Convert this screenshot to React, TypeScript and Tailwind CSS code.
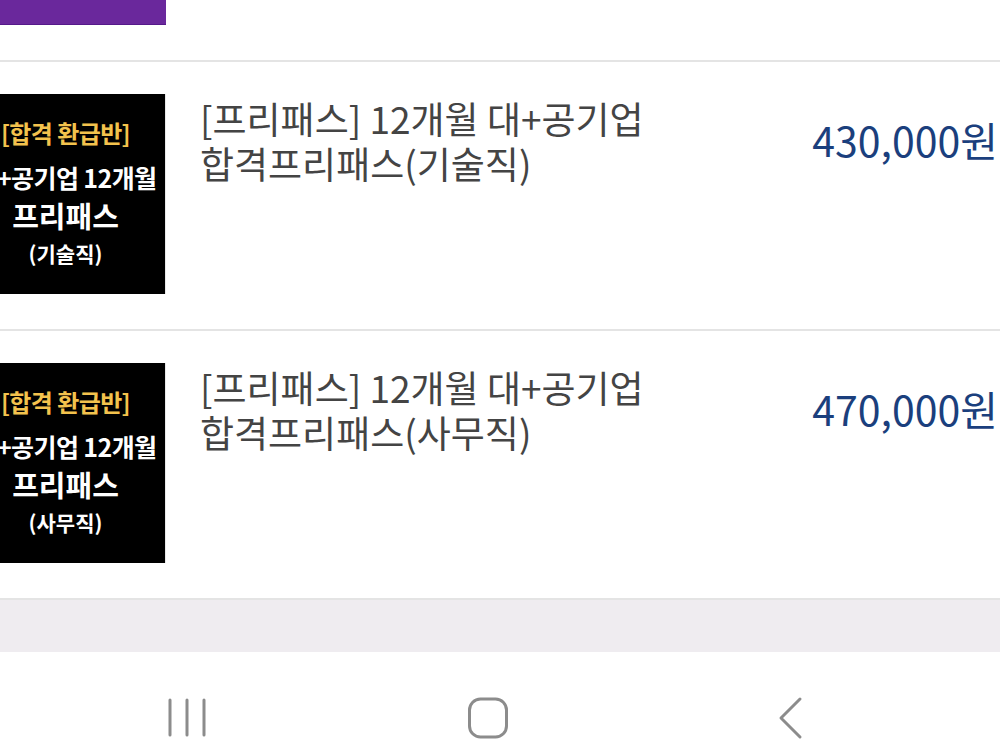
import React from 'react';

interface Product {
  category: string;
  price: string;
}

const products: Product[] = [
  { category: '기술직', price: '430,000원' },
  { category: '사무직', price: '470,000원' },
];

const fontStack = { fontFamily: '"Noto Sans CJK KR", "Noto Sans", sans-serif' };

const Thumbnail: React.FC<{ category: string }> = ({ category }) => (
  <div className="-ml-[34px] w-[200px] h-[200px] shrink-0 bg-black border-r border-[#e8e8e8] flex flex-col items-center pt-[22px] font-bold text-white">
    <div className="text-[24px] leading-[34px] text-[#f3c24d] tracking-[-0.6px] whitespace-nowrap">[합격 환급반]</div>
    <div className="text-[25px] leading-[30px] mt-[12px] tracking-[-0.6px] whitespace-nowrap">대+공기업 12개월</div>
    <div className="text-[29px] leading-[38px] mt-[4px]">프리패스</div>
    <div className="text-[21px] leading-[30px] mt-[4px]">({category})</div>
  </div>
);

const ProductRow: React.FC<{ product: Product }> = ({ product }) => (
  <div className="flex items-start pt-[32px] h-[267px]">
    <Thumbnail category={product.category} />
    <div className="ml-[34px] pt-[2px] w-[500px] text-[37px] leading-[45px] text-[#444444] break-keep">
      [프리패스] 12개월 대+공기업 합격프리패스({product.category})
    </div>
    <div className="ml-auto pt-[23px] pr-[2px] text-[41px] leading-[45px] text-[#1b3f7d] whitespace-nowrap">
      {product.price}
    </div>
  </div>
);

const NavBar: React.FC = () => (
  <div className="h-[98px] bg-white flex items-start pt-[45px]">
    <svg width="40" height="40" viewBox="0 0 40 40" className="ml-[167px]" fill="none" stroke="#8c8c8c" strokeWidth="3" strokeLinecap="round">
      <line x1="3" y1="3" x2="3" y2="38" />
      <line x1="20" y1="3" x2="20" y2="38" />
      <line x1="37" y1="3" x2="37" y2="38" />
    </svg>
    <svg width="42" height="42" viewBox="0 0 42 42" className="ml-[260px]" fill="none" stroke="#8c8c8c" strokeWidth="3">
      <rect x="2.5" y="2" width="37" height="38" rx="11" />
    </svg>
    <svg width="26" height="44" viewBox="0 0 26 44" className="ml-[268px] -mt-[1px]" fill="none" stroke="#8c8c8c" strokeWidth="3" strokeLinecap="round" strokeLinejoin="round">
      <polyline points="23,3 4,22 23,41" />
    </svg>
  </div>
);

export default function App() {
  return (
    <div className="w-[1000px] h-[750px] bg-white overflow-hidden flex flex-col" style={fontStack}>
      <div className="h-[60px]">
        <div className="w-[166px] h-[25px] bg-[#6a289c] border-b border-[#55198a]" />
      </div>
      <div className="h-[2px] bg-[#e4e4e4]" />
      <ProductRow product={products[0]} />
      <div className="h-[2px] bg-[#e4e4e4]" />
      <ProductRow product={products[1]} />
      <div className="h-[2px] bg-[#e4e4e4]" />
      <div className="h-[52px] bg-[#efecf0]" />
      <NavBar />
    </div>
  );
}
